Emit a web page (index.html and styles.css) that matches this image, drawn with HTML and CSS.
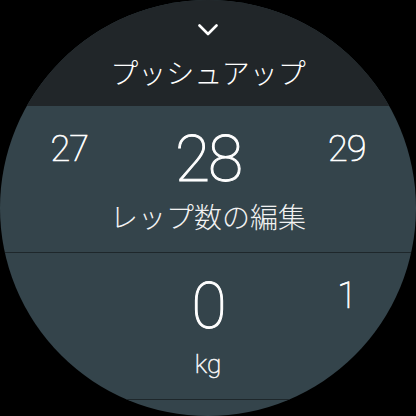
FILE: index.html
```html
<!DOCTYPE html>
<html>

<head>
  <meta charset="UTF-8">
  <meta name="viewport" content="width=device-width, initial-scale=1">
  <title>プッシュアップ</title>
  <link rel="stylesheet" href="styles.css">
</head>

<body>
  <div class="watch">
    <div class="header">
      <svg class="chevron" width="20" height="12" viewBox="0 0 20 12">
        <polyline points="1.5,1.5 10,10 18.5,1.5" fill="none" stroke="#fff" stroke-width="2.6" stroke-linecap="round" stroke-linejoin="round"/>
      </svg>
      <div class="title">プッシュアップ</div>
    </div>

    <div class="picker">
      <div class="values">
        <span class="side">27</span>
        <span class="current">28</span>
        <span class="side">29</span>
      </div>
      <div class="label">レップ数の編集</div>
    </div>

    <div class="picker">
      <div class="values">
        <span class="side"></span>
        <span class="current">0</span>
        <span class="side">1</span>
      </div>
      <div class="label unit">kg</div>
    </div>
  </div>
</body>

</html>
```

FILE: styles.css
```css
body {
  margin: 0;
  padding: 0;
  background-color: #000;
  font-family: 'Roboto', 'Noto Sans CJK JP', sans-serif;
  color: #fff;
}

.watch {
  width: 416px;
  height: 416px;
  border-radius: 50%;
  overflow: hidden;
  background-color: #34444b;
  display: flex;
  flex-direction: column;
}

.header {
  height: 106px;
  flex-shrink: 0;
  background-color: #212629;
  display: flex;
  flex-direction: column;
  align-items: center;
}

.chevron {
  margin-top: 24px;
  display: block;
}

.title {
  margin-top: 22px;
  font-family: 'Noto Sans CJK JP', sans-serif;
  font-weight: 300;
  font-size: 28px;
  line-height: 1;
}

.picker {
  height: 146px;
  flex-shrink: 0;
  border-bottom: 1px solid #1e272b;
  display: flex;
  flex-direction: column;
  align-items: center;
}

/* Roboto only has Thin and Regular here, so thicken the thin face a little */
.values {
  width: 100%;
  display: grid;
  grid-template-columns: repeat(3, 1fr);
  align-items: start;
  padding-top: 22px;
  text-align: center;
  font-weight: 100;
}

.current {
  font-size: 64px;
  line-height: 1;
  letter-spacing: -2px;
  -webkit-text-stroke: 1px #fff;
}

.side {
  font-size: 36px;
  line-height: 1;
  margin-top: 3px;
  letter-spacing: -1px;
  -webkit-text-stroke: 0.7px #fff;
}

.label {
  margin-top: 10px;
  font-family: 'Noto Sans CJK JP', sans-serif;
  font-weight: 300;
  font-size: 28px;
  line-height: 1;
  color: #f2f2f2;
}

.unit {
  font-family: 'Roboto', sans-serif;
  font-weight: 100;
  font-size: 26px;
  margin-top: 12px;
  -webkit-text-stroke: 0.6px #f2f2f2;
}
```
